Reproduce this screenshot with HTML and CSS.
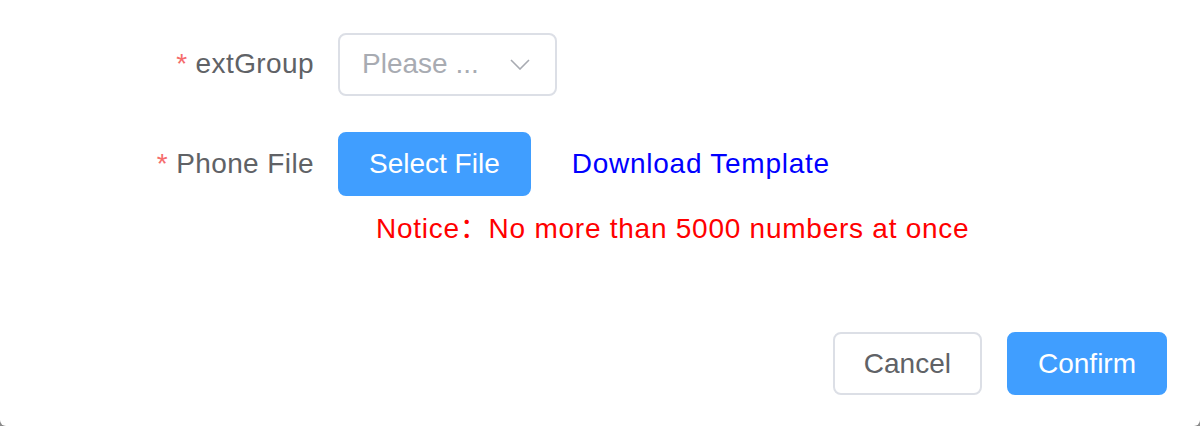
FILE: index.html
```html
<!DOCTYPE html>
<html>
<head>
<meta charset="utf-8">
<link rel="stylesheet" href="styles.css">
</head>
<body>
<div class="dialog">
  <div class="form">
    <div class="form-item">
      <label class="label"><span class="req">*</span> extGroup</label>
      <div class="select">
        <span class="placeholder">Please ...</span>
        <svg class="chevron" width="20" height="11" viewBox="0 0 20 11"><path d="M1 1 L10 10 L19 1" fill="none" stroke="#a8abb2" stroke-width="1.6"/></svg>
      </div>
    </div>
    <div class="form-item row-file">
      <label class="label"><span class="req">*</span> Phone File</label>
      <button class="btn btn-primary">Select File</button>
      <a class="link">Download Template</a>
    </div>
    <div class="notice" lang="zh-CN">Notice：No more than 5000 numbers at once</div>
  </div>
  <div class="footer">
    <button class="btn btn-default">Cancel</button>
    <button class="btn btn-primary">Confirm</button>
  </div>
</div>
</body>
</html>
```
FILE: styles.css
```css
html, body {
  margin: 0;
  padding: 0;
  background: #8a8a8a;
  height: 100%;
}
.dialog {
  box-sizing: border-box;
  width: 1200px;
  height: 426px;
  background: #ffffff;
  border-radius: 0 0 6px 6px;
  display: flex;
  flex-direction: column;
  padding-top: 32px;
  font-family: "Liberation Sans", Arial, sans-serif;
  font-size: 28px;
}
.form {
  display: flex;
  flex-direction: column;
}
.form-item {
  display: flex;
  align-items: center;
  height: 64px;
}
.row-file {
  margin-top: 36px;
}
.label {
  width: 314px;
  margin-right: 24px;
  text-align: right;
  color: #606266;
  white-space: nowrap;
  letter-spacing: 0.4px;
}
.req {
  color: #f56c6c;
}
.select {
  box-sizing: border-box;
  width: 219px;
  height: 63px;
  border: 2px solid #dcdfe6;
  border-radius: 8px;
  display: flex;
  align-items: center;
  justify-content: space-between;
  padding: 0 25px 0 22px;
}
.placeholder {
  color: #a8abb2;
}
.chevron {
  display: block;
}
.btn {
  box-sizing: border-box;
  height: 64px;
  padding: 0 29px;
  border-radius: 8px;
  font-family: "Liberation Sans", Arial, sans-serif;
  font-size: 28px;
  cursor: pointer;
}
.btn-primary {
  background: #409eff;
  border: 2px solid #409eff;
  color: #ffffff;
}
.btn-default {
  background: #ffffff;
  border: 2px solid #dcdfe6;
  color: #606266;
}
.link {
  color: #0000ff;
  margin-left: 41px;
  letter-spacing: 0.75px;
}
.notice {
  color: #ff0000;
  margin-top: 13px;
  line-height: 40px;
  padding-left: 376px;
  letter-spacing: 0.75px;
  font-family: "Liberation Sans", "Noto Sans CJK SC", sans-serif;
}
.footer {
  margin-top: auto;
  display: flex;
  justify-content: flex-end;
  gap: 25px;
  padding: 0 33px 31px 0;
}
.footer .btn {
  height: 63px;
}
```
